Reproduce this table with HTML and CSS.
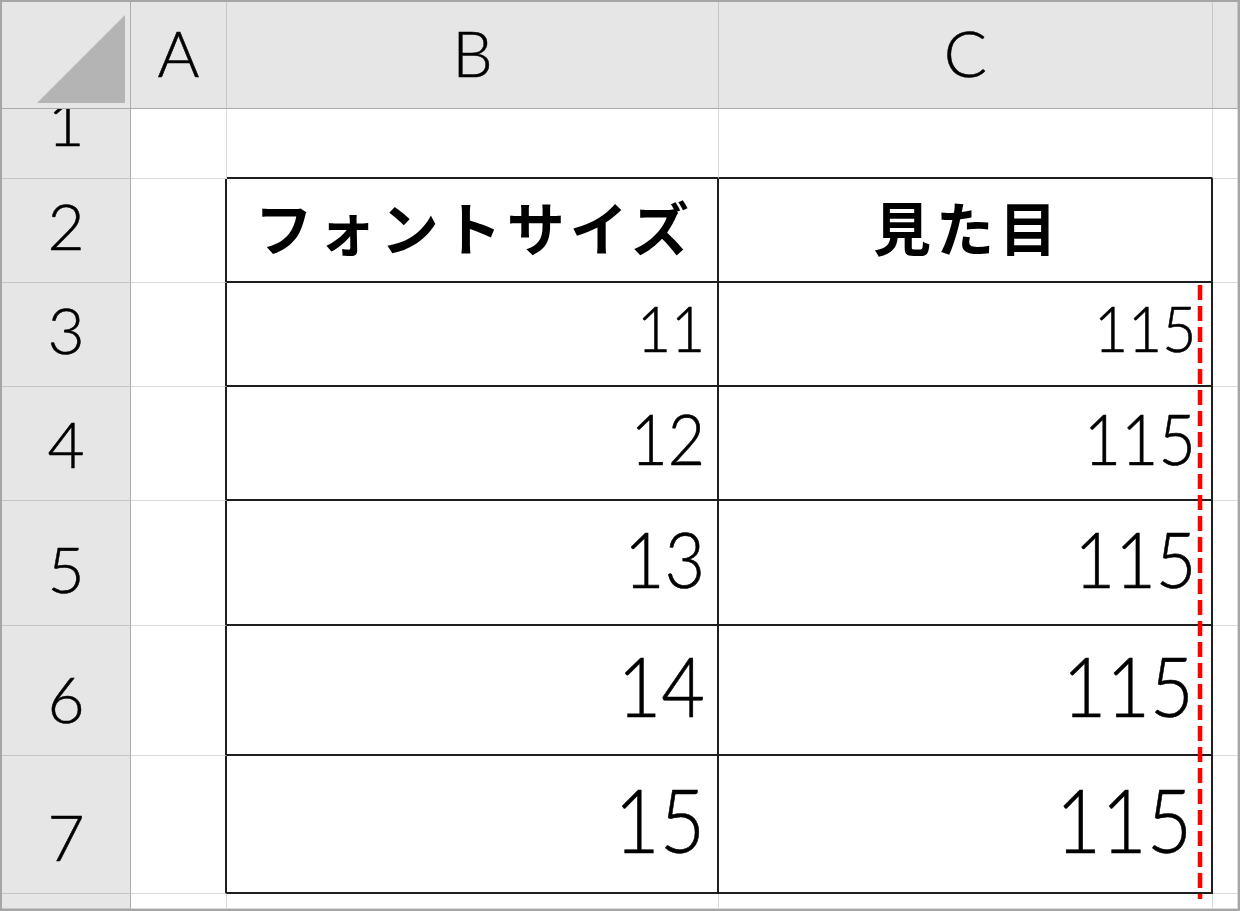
FILE: index.html
```html
<!DOCTYPE html>
<html lang="ja">
<head>
<meta charset="utf-8">
<title>フォントサイズ</title>
<link rel="stylesheet" href="styles.css">
</head>
<body>
<div class="sheet">
  <div class="corner"><svg class="tri" width="128" height="106" viewBox="0 0 128 106"><polygon points="35,101 123,101 123,13" fill="#b4b4b4"/></svg></div>
  <div class="colh"><span class="hd">A</span></div>
  <div class="colh"><span class="hd">B</span></div>
  <div class="colh"><span class="hd">C</span></div>
  <div class="colh"></div>

  <div class="rowh"><span class="hd">1</span></div>
  <div class="cell"></div>
  <div class="cell top"></div>
  <div class="cell top"></div>
  <div class="cell"></div>

  <div class="rowh"><span class="hd">2</span></div>
  <div class="cell left"></div>
  <div class="cell t title"><span class="jp">フォントサイズ</span></div>
  <div class="cell t title"><span class="jp">見た目</span></div>
  <div class="cell"></div>

  <div class="rowh"><span class="hd">3</span></div>
  <div class="cell left"></div>
  <div class="cell t num s11"><span class="n">11</span></div>
  <div class="cell t num c s11"><span class="n">115</span></div>
  <div class="cell"></div>

  <div class="rowh"><span class="hd">4</span></div>
  <div class="cell left"></div>
  <div class="cell t num s12"><span class="n">12</span></div>
  <div class="cell t num c s12"><span class="n">115</span></div>
  <div class="cell"></div>

  <div class="rowh"><span class="hd">5</span></div>
  <div class="cell left"></div>
  <div class="cell t num s13"><span class="n">13</span></div>
  <div class="cell t num c s13"><span class="n">115</span></div>
  <div class="cell"></div>

  <div class="rowh"><span class="hd">6</span></div>
  <div class="cell left"></div>
  <div class="cell t num s14"><span class="n">14</span></div>
  <div class="cell t num c s14"><span class="n">115</span></div>
  <div class="cell"></div>

  <div class="rowh"><span class="hd">7</span></div>
  <div class="cell left"></div>
  <div class="cell t num s15"><span class="n">15</span></div>
  <div class="cell t num c s15"><span class="n">115</span></div>
  <div class="cell"></div>

  <div class="rowh"></div>
  <div class="cell"></div>
  <div class="cell"></div>
  <div class="cell"></div>
  <div class="cell"></div>

  <svg class="guide" width="6" height="614" viewBox="0 0 6 614"><line x1="3" y1="0" x2="3" y2="614" stroke="#ff0000" stroke-width="4.5" stroke-dasharray="15 6"/></svg>
</div>
</body>
</html>
```

FILE: styles.css
```css
html, body {
  margin: 0;
  padding: 0;
  background: #ffffff;
}

.sheet {
  position: relative;
  box-sizing: border-box;
  width: 1240px;
  height: 911px;
  border: 2px solid #a6a6a6;
  display: grid;
  grid-template-columns: 129px 96px 492px 494px 25px;
  grid-template-rows: 107px 70px 104px 104px 114px 125px 130px 138px 15px;
  font-family: Lato, "DejaVu Sans", "Noto Sans CJK JP", sans-serif;
  font-weight: 300;
  color: #000;
  overflow: hidden;
}

.corner {
  background: #e6e6e6;
  border-right: 1px solid #ababab;
  border-bottom: 1px solid #ababab;
  overflow: hidden;
}

.tri {
  display: block;
}

.colh {
  background: #e6e6e6;
  border-right: 1px solid #c6c6c6;
  border-bottom: 1px solid #ababab;
  display: flex;
  align-items: flex-end;
  justify-content: center;
  overflow: hidden;
}

.rowh {
  background: #e6e6e6;
  border-right: 1px solid #ababab;
  border-bottom: 1px solid #c4c4c4;
  display: flex;
  align-items: flex-end;
  justify-content: center;
  overflow: hidden;
}

.hd {
  display: block;
  font-size: 64px;
  line-height: 1;
  padding-bottom: 24px;
  -webkit-text-stroke: 0.5px #000;
}

.colh .hd {
  padding-bottom: 23px;
}

.cell {
  background: #ffffff;
  border-right: 1px solid #dadada;
  border-bottom: 1px solid #dadada;
  display: flex;
  overflow: hidden;
}

.cell.top {
  border-bottom: 2px solid #1e1e1e;
}

.cell.left {
  border-right: 2px solid #1e1e1e;
}

.cell.t {
  border-right: 2px solid #1e1e1e;
  border-bottom: 2px solid #1e1e1e;
}

.title {
  align-items: center;
  justify-content: center;
}

.jp {
  font-family: "Noto Sans CJK JP", sans-serif;
  font-weight: 700;
  font-size: 58px;
  letter-spacing: 5px;
  margin-right: -5px;
  line-height: 1;
  padding-bottom: 8px;
}

.num {
  align-items: flex-end;
  justify-content: flex-end;
  padding-right: 12px;
}

.num.c {
  padding-right: 15px;
}

.n {
  display: inline-block;
  line-height: 1;
  transform: scaleX(0.92);
  transform-origin: right bottom;
  -webkit-text-stroke: 0.6px #000;
}

.s11 .n { font-size: 64px; padding-bottom: 25px; }
.s12 .n { font-size: 70px; padding-bottom: 26px; }
.s13 .n { font-size: 76px; padding-bottom: 27px; }
.s14 .n { font-size: 82px; padding-bottom: 28px; }
.s15 .n { font-size: 88px; padding-bottom: 29px; transform: scaleX(0.89); }

.num.c.s14 { padding-right: 17px; }
.num.c.s15 { padding-right: 19px; }

.guide {
  position: absolute;
  left: 1195px;
  top: 283px;
  display: block;
}
```
